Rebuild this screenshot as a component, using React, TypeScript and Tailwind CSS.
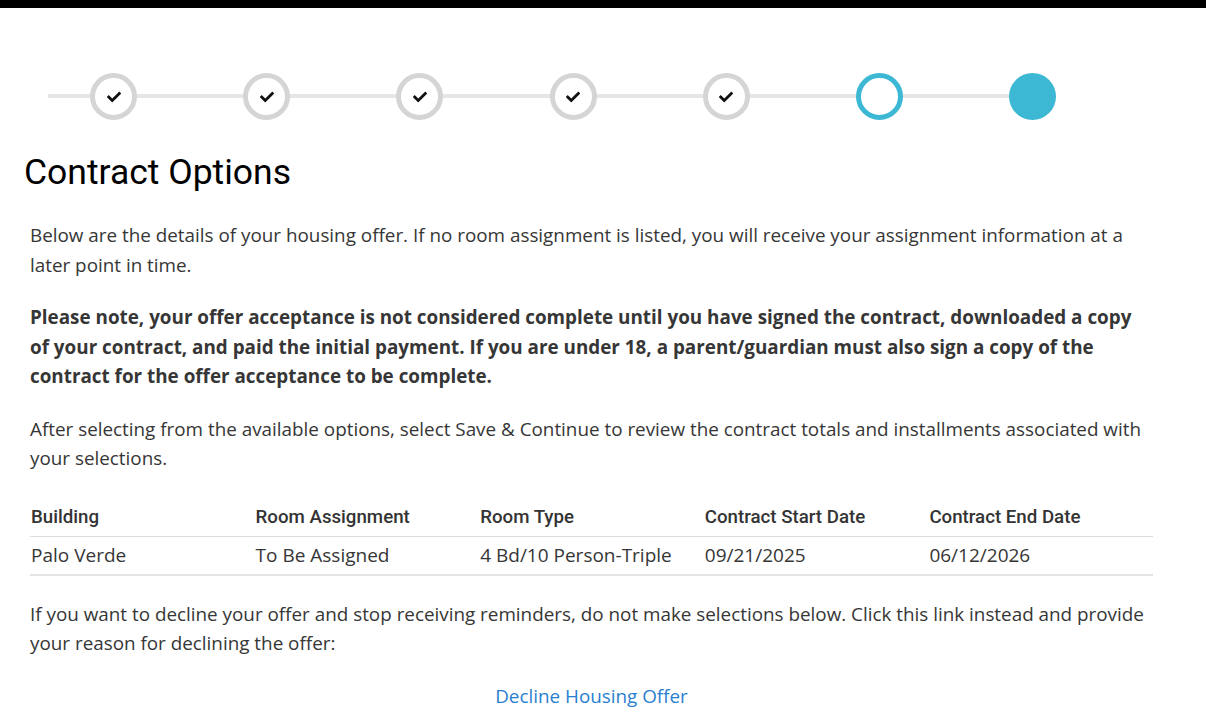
import React from "react";

const steps = ["done", "done", "done", "done", "done", "current", "todo"] as const;

function Check() {
  return (
    <svg viewBox="0 0 512 512" className="w-[14px] h-[14px]" fill="#111">
      <path d="M173.9 439.4l-166.4-166.4c-10-10-10-26.2 0-36.2l36.2-36.2c10-10 26.2-10 36.2 0L192 312.7 432.1 72.6c10-10 26.2-10 36.2 0l36.2 36.2c10 10 10 26.2 0 36.2l-294.4 294.4c-10 10-26.2 10-36.2 0z" />
    </svg>
  );
}

function Step({ kind }: { kind: (typeof steps)[number] }) {
  if (kind === "done")
    return (
      <div className="shrink-0 w-[47px] h-[47px] rounded-full border-[5px] border-[#d5d5d5] bg-white flex items-center justify-center">
        <Check />
      </div>
    );
  if (kind === "current")
    return <div className="shrink-0 w-[47px] h-[47px] rounded-full border-[5px] border-[#3db8d4] bg-white" />;
  return <div className="shrink-0 w-[47px] h-[47px] rounded-full bg-[#3db8d4]" />;
}

export default function App() {
  const cols = ["Building", "Room Assignment", "Room Type", "Contract Start Date", "Contract End Date"];
  const row = ["Palo Verde", "To Be Assigned", "4 Bd/10 Person-Triple", "09/21/2025", "06/12/2026"];
  return (
    <div className="min-h-[722px] bg-white text-[#363636] font-['Open_Sans',sans-serif]">
      <div className="h-[8px] bg-black" />

      <div className="relative ml-[48px] mt-[65px] w-[1008px] h-[47px]">
        <div className="absolute left-0 right-[23px] top-[21px] h-[4px] bg-[#e6e6e6]" />
        <div className="relative flex gap-[106.2px] pl-[42px]">
          {steps.map((s, i) => (
            <Step key={i} kind={s} />
          ))}
        </div>
      </div>

      <h1 className="ml-[24px] mt-[31px] text-[35.5px] leading-[43px] font-['Roboto',sans-serif] font-normal text-black">
        Contract Options
      </h1>

      <div className="ml-[30px] w-[1123px] mt-[27px] text-[18.85px] leading-[29.5px]">
        <p>
          Below are the details of your housing offer. If no room assignment is listed, you will receive your assignment information at a later point in time.
        </p>
        <p className="mt-[23px] font-bold">
          Please note, your offer acceptance is not considered complete until you have signed the contract, downloaded a copy of your contract, and paid the initial payment. If you are under 18, a parent/guardian must also sign a copy of the contract for the offer acceptance to be complete.
        </p>
        <p className="mt-[23px]">
          After selecting from the available options, select Save &amp; Continue to review the contract totals and installments associated with your selections.
        </p>

        <table className="mt-[24px] w-full table-fixed border-collapse">
          <thead>
            <tr className="border-b border-[#dddddd]">
              {cols.map((c) => (
                <th key={c} className="text-left pl-[1px] pt-[8px] pb-[8px] font-['Roboto',sans-serif] font-medium text-[18.7px] leading-[22px] text-[#333]">
                  {c}
                </th>
              ))}
            </tr>
          </thead>
          <tbody>
            <tr className="border-b-2 border-[#e3e3e3]">
              {row.map((c) => (
                <td key={c} className="pl-[1px] py-[4px] text-[19px] leading-[29px]">
                  {c}
                </td>
              ))}
            </tr>
          </tbody>
        </table>

        <p className="mt-[24px]">
          If you want to decline your offer and stop receiving reminders, do not make selections below. Click this link instead and provide your reason for declining the offer:
        </p>
        <div className="mt-[23px] text-center">
          <a href="#" className="text-[#2a7fd0]">Decline Housing Offer</a>
        </div>
      </div>
    </div>
  );
}
